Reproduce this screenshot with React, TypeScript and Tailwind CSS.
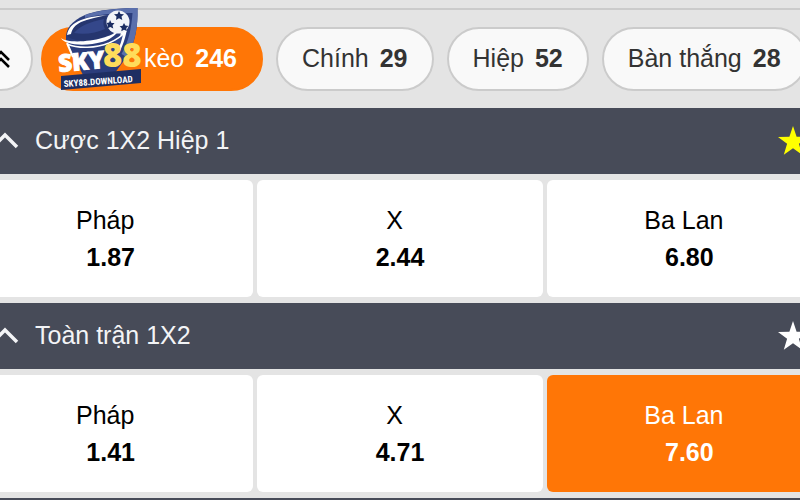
import React from "react";

type Tab = { label: string; count: number; active?: boolean };
type Odd = { name: string; price: string; active?: boolean };
type Market = { title: string; favourite: boolean; odds: Odd[] };

const tabs: Tab[] = [
  { label: "kèo", count: 246, active: true },
  { label: "Chính", count: 29 },
  { label: "Hiệp", count: 52 },
  { label: "Bàn thắng", count: 28 },
];

const markets: Market[] = [
  {
    title: "Cược 1X2 Hiệp 1",
    favourite: true,
    odds: [
      { name: "Pháp", price: "1.87" },
      { name: "X", price: "2.44" },
      { name: "Ba Lan", price: "6.80" },
    ],
  },
  {
    title: "Toàn trận 1X2",
    favourite: false,
    odds: [
      { name: "Pháp", price: "1.41" },
      { name: "X", price: "4.71" },
      { name: "Ba Lan", price: "7.60", active: true },
    ],
  },
];

function Star({ filled }: { filled: boolean }) {
  return (
    <svg viewBox="0 0 30 30" className={filled ? "size-[30px] text-[#ffff00]" : "size-[30px] text-white"} aria-hidden="true">
      <path fill="currentColor" d="M15 0l3.600 10.700 11.400.2-9.100 6.900 3.300 10.900L15 22.200l-9.200 6.500 3.300-10.900L0 10.900l11.400-.2z" />
    </svg>
  );
}

function Logo() {
  return (
    <svg
      viewBox="0 0 84 84"
      className="pointer-events-none absolute -top-[3px] left-[90px] size-[84px]"
      role="img"
      aria-label="SKY88.DOWNLOAD"
    >
      {/* cup and its right-hand shield edge */}
      <path d="M8 33c-1-12 6-19 19-25C40 3 58 1 79.500 1c.5 18-2 35-11 49L54 70H26L16 50z" fill="#2b3d7c" />
      <path d="M27 8C42 3 60 1 79.500 1c.5 18-2 35-11 49l-5-3c7-12 10-26 11-41C58 6 42 7 27 11z" fill="#5a6fac" />
      <path d="M70 14c-1 12-4 22-9 32l-5-2c4-7 6-13 7-19z" fill="#fff" />
      <path d="M65 27c-1 6-3 11-5 16l-8 2c3-5 5-9 6-14z" fill="#33478a" />
      {/* rim */}
      <path d="M10 30c1-10 11-17 39-22-2 8 0 14 6 18-12 7-32 11-45 4z" fill="#26366f" />
      <path d="M16 26c6-7 15-11 30-14-1 3-1 6 1 10-9 4-20 6-31 4z" fill="#34478a" />
      <path d="M9 28c1-7 6-12 14-15 8-3 16-4 27-5-11 2-20 4-27 7-6 3-9 7-10 12z" fill="#fff" />
      <path d="M3 31c5 5 28 4 41 0 8-2 13-5 17-8-4 6-10 10-17 12-14 4-37 4-41-4z" fill="#fff" />
      <path d="M9 37c12 5 29 4 42-1 7-3 13-7 17-12" fill="none" stroke="#fff" strokeWidth="1.500" />
      <path d="M9 36l6 14" stroke="#fff" strokeWidth="2" />
      {/* ball */}
      <circle cx="60" cy="15" r="11.500" fill="#f2f4f8" />
      <path
        d="M61 4l1.500 3 3.500.3-2.500 2.300.8 3.400-3.300-1.700-3 1.700.5-3.400L56 7.300l3.500-.4zM52 13l1.500 3 3 .1-2 2.300.8 3-3-1.500-3 1.600.4-3.500-1-2 2.500-.4zM66 16l1.400 2.600 3.100.4-2.200 2 .5 3-2.800-1.300-2.700 1.500.5-3-2.200-2 3-.5z"
        fill="#1b2d62"
      />
      <g fontFamily="Open Sans, Liberation Sans, sans-serif" fontWeight="800">
        <text x="1" y="65" transform="rotate(-5 1 65)" fontSize="24" fill="#fff" stroke="#fff" strokeWidth="1">
          SKY
        </text>
        <text x="45" y="60" fontSize="33" fill="#ffdc5b">
          88
        </text>
      </g>
      <path d="M3 69l80-7v14L3 83z" fill="#1e2e62" />
      <text
        x="6"
        y="80"
        transform="rotate(-4 6 80)"
        fontFamily="Liberation Sans Narrow, Roboto Condensed, Roboto, sans-serif"
        fontWeight="700"
        fontSize="9"
        fill="#fff"
      >
        SKY88.DOWNLOAD
      </text>
    </svg>
  );
}

function OddButton({ odd }: { odd: Odd }) {
  return (
    <button
      type="button"
      className={`flex h-[117px] flex-col items-center justify-center rounded-md text-[25px] leading-[37px] ${
        odd.active ? "bg-[#ff7606] text-white" : "bg-white text-black"
      }`}
    >
      <span className="pr-[11px]">{odd.name}</span>
      <strong>{odd.price}</strong>
    </button>
  );
}

export default function App() {
  return (
    <main className="h-screen overflow-hidden bg-[#e4e4e4] font-['Liberation_Sans',Arial,sans-serif] text-[25px]">
      <div className="-mx-8">
        <div className="h-[10px] border-b-2 border-[#cbcbcb]" />
        <nav className="relative flex h-[98px] items-center gap-[13px]">
          <button
            type="button"
            aria-label="Thu gọn"
            className="-mr-[5px] flex h-16 w-[65px] shrink-0 items-center justify-center rounded-r-full border-2 border-[#cbcbcb] bg-[#f9f9f9] text-black"
          >
            <svg viewBox="0 0 24 24" className="size-6" fill="none" stroke="currentColor" strokeWidth="2.500" aria-hidden="true">
              <path d="M4 13l8-8 8 8M4 20l8-8 8 8" />
            </svg>
          </button>
          {tabs.map((tab) => (
            <button
              key={tab.label}
              type="button"
              className={`flex h-16 shrink-0 items-center gap-[11px] rounded-full border-2 px-6 whitespace-nowrap ${
                tab.active
                  ? "w-[222px] justify-end border-[#ff7606] bg-[#ff7606] text-white"
                  : "border-[#cbcbcb] bg-[#f9f9f9] text-[#333]"
              }`}
            >
              <span>{tab.label}</span>
              <strong>{tab.count}</strong>
            </button>
          ))}
          <Logo />
        </nav>
        {markets.map((market) => (
          <section key={market.title}>
            <header className="flex h-[66px] items-center bg-[#474b58] text-[#f3f4f6]">
              <button type="button" className="flex grow items-center gap-[15px] pl-6 text-left">
                <svg viewBox="0 0 28 28" className="size-7" fill="none" stroke="currentColor" strokeWidth="3.500" aria-hidden="true">
                  <path d="M1 20L13 8l12 12" />
                </svg>
                <h2>{market.title}</h2>
              </button>
              <button type="button" aria-label="Yêu thích" className="mr-6">
                <Star filled={market.favourite} />
              </button>
            </header>
            <div className="grid grid-cols-3 gap-1 py-[6px]">
              {market.odds.map((odd) => (
                <OddButton key={odd.name} odd={odd} />
              ))}
            </div>
          </section>
        ))}
        <div className="h-[66px] bg-[#474b58]" />
      </div>
    </main>
  );
}
